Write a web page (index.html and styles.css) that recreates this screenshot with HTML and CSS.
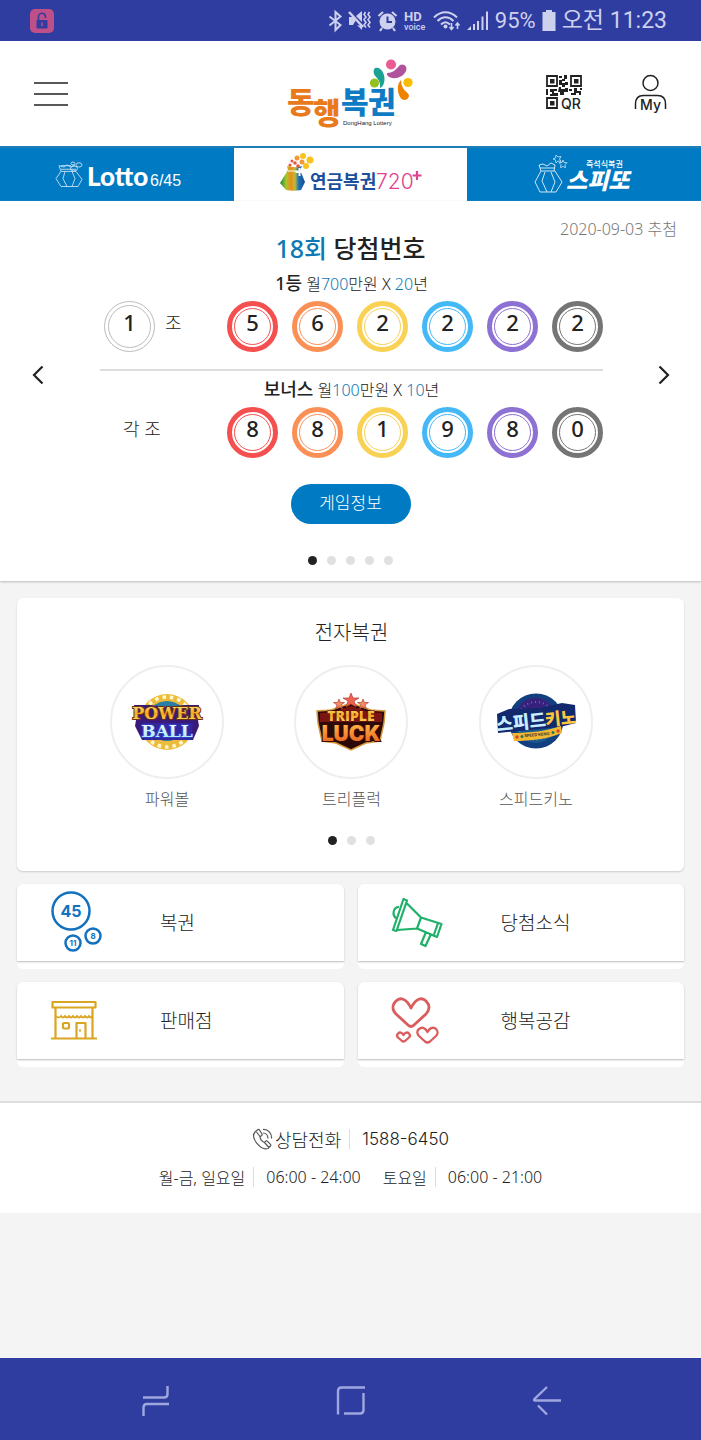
FILE: index.html
```html
<!DOCTYPE html>
<html lang="ko">
<head>
<meta charset="utf-8">
<meta name="viewport" content="width=device-width, initial-scale=1">
<title>동행복권</title>
<link rel="stylesheet" href="styles.css">
</head>
<body>
<div class="status">
  <svg class="status-lock" width="24" height="24" viewBox="0 0 24 24" aria-hidden="true">
    <rect width="24" height="24" rx="5" fill="#bf4f88"/>
    <path d="M8.500 11V8a3.500 3.500 0 0 1 7-.5V9" fill="none" stroke="#303da0" stroke-width="1.600"/>
    <rect x="6.500" y="11" width="11" height="8.500" rx="1" fill="#303da0"/>
    <path d="M12 13.500v3.500" stroke="#bf4f88" stroke-width="1.600"/>
  </svg>
  <svg width="15" height="22" viewBox="0 0 15 22" aria-hidden="true"><path d="M1.500 6.500 12.500 15 7.500 20V2l5 4.500L1.500 15.500" fill="none" stroke="#cdd1ee" stroke-width="2"/></svg>
  <svg width="22" height="22" viewBox="0 0 22 22" aria-hidden="true"><path d="M0 7h4l3 3-3 5H0zM7 6l6-5v11zM8 15l5 5v-4z" fill="#cdd1ee"/><path d="M0 2 14 17" stroke="#cdd1ee" stroke-width="2.500"/><path d="M16.500 2 15 4.500 17 7l-2 2.500 2 3L15 15l2 2.500M20.500 2 19 4.500 21 7l-2 2.500 2 3-2 2.500 2 2.500" fill="none" stroke="#cdd1ee" stroke-width="1.600"/></svg>
  <svg width="21" height="22" viewBox="0 0 21 22" aria-hidden="true"><circle cx="10.500" cy="11.500" r="8" fill="#cdd1ee"/><path d="M1.500 6 6 2M19.500 6 15 2M5 18l-2 3M16 18l2 3" stroke="#cdd1ee" stroke-width="2.200"/><path d="M10.500 6.500V12H15" fill="none" stroke="#303da0" stroke-width="2"/></svg>
  <svg width="23" height="22" viewBox="0 0 23 22" aria-label="HD voice"><text x="0" y="11" class="st-hd">HD</text><text x="0" y="20" class="st-voice">voice</text></svg>
  <svg width="28" height="22" viewBox="0 0 28 22" aria-hidden="true"><path d="M1 7.500c7-7 16-7 23 0M4.500 11c5-5 11-5 16 0M8 14.500c3-3 6-3 9 0" fill="none" stroke="#cdd1ee" stroke-width="2"/><circle cx="12.500" cy="16.500" r="2" fill="#cdd1ee"/><path d="M18.500 13v6M16.500 17l2 2.500 2-2.500M24.500 19v-6M22.500 15.500l2-2.500 2 2.500" fill="none" stroke="#cdd1ee" stroke-width="1.500"/></svg>
  <svg width="22" height="22" viewBox="0 0 22 22" aria-hidden="true"><path d="M0 20h4v-4zM6 20V14h2v6zM10 20v-9h2v9zM14.500 20V6.500h2V20zM19 20V1.500h2V20z" fill="#cdd1ee"/></svg>
  <span class="status-level">95%</span>
  <svg width="14" height="22" viewBox="0 0 14 22" aria-hidden="true"><path d="M4 0h6v2h3.500v19H.5V2H4z" fill="#cdd1ee"/></svg>
  <span class="status-time">오전 11:23</span>
</div>

<header class="header">
  <button class="icon-btn" type="button" aria-label="메뉴">
    <svg width="34" height="24" viewBox="0 0 34 24" aria-hidden="true"><path d="M0 1h34M0 12h34M0 23h34" stroke="#222" stroke-width="1.500"/></svg>
  </button>
  <a class="logo" href="#">
    <svg width="126" height="72" viewBox="0 0 126 72" role="img" aria-label="동행복권 DongHang Lottery">
      <g class="logo-word"><text x="-1" y="55" class="orange">동</text><text x="25" y="66" class="orange">행</text><text x="53" y="55" class="blue">복</text><text x="80" y="55" class="blue">권</text></g>
      <text x="55" y="67" class="logo-sub">DongHang Lottery</text>
      <circle cx="103" cy="6.500" r="5" fill="#ea5a93"/>
      <circle cx="86.500" cy="25" r="4.600" fill="#94c120"/>
      <circle cx="120" cy="24.500" r="4.600" fill="#fbbb00"/>
      <path d="M87 10c6-2 10 6 9.500 12-.3 4-2 7-4.500 8 1-8-4-10-6-14-1-3 0-5 1-6z" fill="#1ba196"/>
      <path d="M99 15c7 0 9-4 13-8 4-2 8 2 6 6-3 7-14 10-19 4z" fill="#b0539d"/>
      <path d="M113 22c-4 4-4 11-1 17 2 4 8 4 9-1 0-4-8-5-8-16z" fill="#ef8200"/>
    </svg>
  </a>
  <div class="header-tools">
    <button class="icon-btn" type="button">
      <svg width="38" height="38" viewBox="0 0 38 38" role="img" aria-label="QR">
        <g fill="none" stroke="#222" stroke-width="1.800"><path d="M1 1h10v10H1zM25 1h10v10H25zM1 23h10v10H1z"/></g>
        <path d="M4 4h4.500v4.500H4zM28 4h4.500v4.500H28zM4 26h4.500v4.500H4z" fill="#222"/>
        <path d="M13 1h3v2h-3zM18 0h3v4h-2v2h-3V4h2zM13 5h3v3h3V7h3v3h-3v2h-3v-2h-3zM13 12h2v2h4v-1h3v4h-4v3h-4v-3h-2zM0 14h2v6H0zM4 14h7v2H8v2h4v3H4v-2h2v-2H4zM23 14h3v2h-3zM28 13h3v3h4v4h-2v-2h-3v2h-5v-2h3zM34 13h2v2h-2z" fill="#222"/>
        <text x="15" y="34" class="tool-text">QR</text>
      </svg>
    </button>
    <button class="icon-btn" type="button">
      <svg width="33" height="38" viewBox="0 0 33 38" role="img" aria-label="My">
        <circle cx="16.500" cy="8" r="7.500" fill="none" stroke="#222" stroke-width="1.500"/>
        <path d="M1.500 34v-5c0-6 3-8.500 8-8.500h14c5 0 8 2.500 8 8.500v5" fill="none" stroke="#222" stroke-width="1.500"/>
        <text x="16.500" y="35" text-anchor="middle" class="tool-text">My</text>
      </svg>
    </button>
  </div>
</header>

<nav class="tabs">
  <a class="tab" href="#">
    <svg width="132" height="44" viewBox="-3 0 132 44" role="img" aria-label="Lotto 6/45">
      <g fill="none" stroke="#cfe6f5" stroke-width="1" transform="translate(0 4) scale(1 .72)"><path d="M7 20 2 30l5 11h17l4-10-6-11zM11 20l-2 10 4 11M18 20l3 10-3 11M7 20l-2-8 5 2 3-3 4 3 4-3M7 17h15M7 12h10"/><circle cx="25" cy="11" r="3"/><circle cx="20" cy="16" r="3.500"/><circle cx="19" cy="9" r="2"/></g>
      <text x="33" y="33" class="t-lotto">Lotto</text><text x="96" y="33" class="t-645">6/45</text>
    </svg>
  </a>
  <a class="tab tab-on" href="#" aria-current="page">
    <svg width="144" height="44" viewBox="0 0 144 44" role="img" aria-label="연금복권 720+">
      <defs><linearGradient id="bag"><stop offset="0" stop-color="#1c8a3c"/><stop offset=".25" stop-color="#a9c62a"/><stop offset=".45" stop-color="#f08a1c"/><stop offset=".6" stop-color="#b8c03a"/><stop offset=".75" stop-color="#1f6fb5"/><stop offset="1" stop-color="#164b92"/></linearGradient></defs>
      <g transform="translate(2 -4)">
        <path d="M7 17 8 21 0 34l6 7c5 1 10 1 15 0l4-8-5-12 2-4c-5 2-10 1-15 0z" fill="url(#bag)"/>
        <path d="M8 22h11" stroke="#fff" stroke-width="1"/>
        <path d="M19.500 19v8M15.500 23h8" stroke="#fff" stroke-width="2"/>
        <g fill="#f9c21c"><circle cx="23" cy="7" r="3"/><circle cx="30" cy="11" r="3.500"/><circle cx="26" cy="17" r="3"/></g>
        <g fill="#f2983a"><circle cx="17" cy="9" r="2.500"/><circle cx="22" cy="13" r="2.500"/></g>
        <g fill="#e6573d"><circle cx="12" cy="12" r="1.500"/><circle cx="15" cy="14" r="1.800"/><circle cx="10" cy="16" r="1.600"/><circle cx="18" cy="17" r="1.800"/></g>
      </g>
      <text x="32" y="35" class="t-pension">연금복권</text><text x="98" y="36" class="t-720">720</text><path d="M139 18v9M134.500 22.500h9" stroke="#e0418c" stroke-width="2.200"/>
    </svg>
  </a>
  <a class="tab" href="#">
    <svg width="104" height="44" viewBox="0 0 104 44" role="img" aria-label="즉석식복권 스피또">
      <g fill="none" stroke="#cfe6f5" stroke-width="1" transform="translate(2 -3)"><path d="M7 21 1 32l5 10h16l6-10-7-11zM11 22 8 31l5 11M17 22l4 10-4 10M7 21l-2-6 4-1 4 2 4-3 4 2-1 6M6 18h15"/><path d="m22 5 2 2 3-.5-1.500 2.500 1.500 2.500-3-.5-2 2-.5-3L19 9l2.500-1zM29 10l1 2.500 3 .2-2 2 .5 3-2.500-1.300-2.500 1.300.5-3-2-2 3-.2z" stroke-width=".8"/></g>
      <text x="54" y="14" class="t-instant">즉석식복권</text><text x="34" y="36" class="t-speetto">스피또</text>
    </svg>
  </a>
</nav>

<section class="result">
  <div class="result-head">
    <h1 class="round"><span class="accent">18회</span> 당첨번호</h1>
    <time class="date" datetime="2020-09-03">2020-09-03 추첨</time>
  </div>
  <div class="result-body">
    <button class="arrow" type="button" aria-label="이전"><svg width="12" height="20" viewBox="0 0 12 20" aria-hidden="true"><path d="M10.500 1.500 2 10l8.500 8.500" fill="none" stroke="#222" stroke-width="2.200"/></svg></button>
    <div class="prizes">
      <p class="prize-name"><strong>1등</strong> 월<span class="accent">700</span>만원 X <span class="accent">20</span>년</p>
      <div class="draw">
        <div class="group"><span class="ball plain">1</span><span>조</span></div>
        <div class="balls"><span class="ball red">5</span><span class="ball coral">6</span><span class="ball yellow">2</span><span class="ball sky">2</span><span class="ball purple">2</span><span class="ball gray">2</span></div>
      </div>
      <hr class="rule">
      <p class="prize-name"><strong>보너스</strong> 월<span class="accent">100</span>만원 X <span class="accent">10</span>년</p>
      <div class="draw">
        <div class="group group-all"><span>각 조</span></div>
        <div class="balls"><span class="ball red">8</span><span class="ball coral">8</span><span class="ball yellow">1</span><span class="ball sky">9</span><span class="ball purple">8</span><span class="ball gray">0</span></div>
      </div>
    </div>
    <button class="arrow" type="button" aria-label="다음"><svg width="12" height="20" viewBox="0 0 12 20" aria-hidden="true"><path d="M1.500 1.500 10 10l-8.500 8.500" fill="none" stroke="#222" stroke-width="2.200"/></svg></button>
  </div>
  <button class="info-btn" type="button">게임정보</button>
  <div class="dots"><i class="dot dot-on"></i><i class="dot"></i><i class="dot"></i><i class="dot"></i><i class="dot"></i></div>
</section>

<main class="main">
  <section class="games">
    <h2 class="games-title">전자복권</h2>
    <div class="games-list">
      <a class="game" href="#">
        <span class="game-pic">
          <svg width="84" height="60" viewBox="0 0 84 60" aria-hidden="true">
            <defs>
              <linearGradient id="gold" x2="0" y2="1"><stop offset="0" stop-color="#fff08a"/><stop offset=".5" stop-color="#f5a81e"/><stop offset="1" stop-color="#ffe27a"/></linearGradient>
              <linearGradient id="ice" x2="0" y2="1"><stop offset="0" stop-color="#fff"/><stop offset="1" stop-color="#9be8fa"/></linearGradient>
            </defs>
            <circle cx="42" cy="30" r="28" fill="#eebc3c"/>
            <circle cx="42" cy="30" r="25" fill="none" stroke="#fff7cf" stroke-width="3.500" stroke-dasharray="3.500 4"/>
            <circle cx="42" cy="29" r="20" fill="#2b7da6"/>
            <path d="M9 13h16l17 2 17-2h15l-1 15 1 6-6 14H17l-7-14 1-6z" fill="#3a1a78"/>
            <path d="M17 31h51l-2 17H19z" fill="#3526a0"/>
            <text x="42" y="27" text-anchor="middle" class="g-power">POWER</text>
            <text x="42" y="45" text-anchor="middle" class="g-ball">BALL</text>
          </svg>
        </span>
        <span class="game-name">파워볼</span>
      </a>
      <a class="game" href="#">
        <span class="game-pic">
          <svg width="84" height="60" viewBox="0 0 84 60" aria-hidden="true">
            <defs><linearGradient id="fire" x2="0" y2="1"><stop offset="0" stop-color="#ffc14a"/><stop offset="1" stop-color="#ea5a1c"/></linearGradient></defs>
            <path d="M42 11 62 18l14 1-1 12-4 18-14 2-15 7-15-7-14-2-4-18-1-12 14-1z" fill="#2a0908" stroke="#d69a3c" stroke-width="1.500"/>
            <path d="M42 14 60 20l13 1v9H11v-9l13-1z" fill="#7d1414"/>
            <g fill="#ef6250" stroke="#b5402d" stroke-width=".7"><path d="m42 1 2 5h6l-5 3 2 6-5-3-5 3 2-6-5-3h6z"/><path d="m30 7 1.500 3.500h4L32 13l1.500 4-3.500-2.500-3.500 2.500 1.500-4-3.500-2.500h4z" fill="#f38a67"/><path d="m54 7 1.500 3.500h4L56 13l1.500 4-3.500-2.500-3.500 2.500 1.500-4-3.500-2.500h4z" fill="#f38a67"/></g>
            <text x="42" y="29" text-anchor="middle" class="g-triple">TRIPLE</text>
            <text x="42" y="49" text-anchor="middle" class="g-luck">LUCK</text>
          </svg>
        </span>
        <span class="game-name">트리플럭</span>
      </a>
      <a class="game" href="#">
        <span class="game-pic">
          <svg width="84" height="60" viewBox="0 0 84 60" aria-hidden="true">
            <circle cx="42" cy="29" r="27.500" fill="#123f80"/>
            <circle cx="42" cy="29" r="22" fill="#17568f"/>
            <path d="M22 22a20 20 0 0 1 38-4L42 24z" fill="#39207c"/>
            <circle cx="42" cy="29" r="19" fill="none" stroke="#4d73b5" stroke-width="2" stroke-dasharray="1 3"/>
            <path d="m3 22 12-5 31-1 22-5 13 2 1 18-16 4-62 6z" fill="#12296e"/>
            <path d="M18 41c18 0 34-2 49-7l1 7c-14 6-31 8-48 8z" fill="#f2b832"/>
            <g fill="#d8472b"><circle cx="23" cy="45" r="1.700"/><circle cx="64" cy="39" r="1.700"/></g><g fill="#275"><circle cx="28" cy="44.500" r="1.500"/><circle cx="59" cy="40.500" r="1.500"/></g>
            <text x="43" y="44" text-anchor="middle" class="g-tiny" transform="rotate(-5 43 44)">SPEED KENO</text>
            <g transform="rotate(-6 42 28)"><text x="2" y="35" class="g-speed">스피드</text><text x="51" y="35" class="g-keno">키노</text></g>
          </svg>
        </span>
        <span class="game-name">스피드키노</span>
      </a>
    </div>
    <div class="dots"><i class="dot dot-on"></i><i class="dot"></i><i class="dot"></i></div>
  </section>

  <nav class="tiles">
    <a class="tile" href="#"><span class="tile-face">
      <svg width="54" height="64" viewBox="0 0 54 64" aria-hidden="true"><g fill="none" stroke="#1272be" stroke-width="2.500"><circle cx="20" cy="21" r="18.500"/><circle cx="42" cy="46" r="7.500"/><circle cx="22" cy="53" r="7.500"/></g><text x="20" y="27" text-anchor="middle" class="n45">45</text><text x="42" y="49" text-anchor="middle" class="n8">8</text><text x="22" y="56" text-anchor="middle" class="n8">11</text></svg>
      <span>복권</span></span></a>
    <a class="tile" href="#"><span class="tile-face">
      <svg width="54" height="64" viewBox="3 1 54 64" aria-hidden="true"><g fill="none" stroke="#1fb069" stroke-width="2.200" stroke-linejoin="round"><path d="M14.500 10 18 11.500 7.500 42 4 41zM17.500 14 32 28.500M8 41l20-1.500M32 28.500 52.500 35 48 48l-20-8.500zM49 34l-4.500 13M37 43l-5 12 4.500 2L42 45M10 18c-6 0-7 8-3 11"/></g></svg>
      <span>당첨소식</span></span></a>
    <a class="tile" href="#"><span class="tile-face">
      <svg width="54" height="64" viewBox="0 0 54 64" aria-hidden="true"><g fill="none" stroke="#daa520" stroke-width="2.200"><path d="M1.500 14h43v5.500h-43zM4.500 20v30M41.500 20v30M0 50.500h46M25.500 50V35h9v15" stroke-linejoin="round"/><rect x="12" y="35" width="6" height="5.500" rx="1"/><path d="M5 28q2.500 3 5 0q2 3 4 0q2 3 4 0q2 3 4 0q2 3 4 0q2 3 4 0q2 3 4 0q2 3 4 0q2 3 3.500 0" stroke-width="1.800"/><path d="M28 42.500h2"/></g></svg>
      <span>판매점</span></span></a>
    <a class="tile" href="#"><span class="tile-face">
      <svg width="54" height="64" viewBox="1 -1 54 64" aria-hidden="true"><g fill="none" stroke="#db5c5c" stroke-width="2.800" stroke-linejoin="round"><path d="M20 19C15 9 9 8 5 12s-4 9 0 13l12 11q3 3 6 0l12-11c4-4 4-9 0-13s-10-3-15 7z"/><path d="M36.500 43c-2.500-5-6-5-8.500-3s-2 5 0 7l6 5.500q2.500 2 5 0l6-5.500c2-2 2-5 0-7s-6-2-8.500 3z" stroke-width="2.300"/><path d="M12.500 46c-1.500-3-4-3-5.500-1.500s-1 3 0 4l4 3.500q1.500 1 3 0l4-3.500c1-1 1.500-2.500 0-4s-4-1.500-5.500 1.500z" stroke-width="2.300"/></g></svg>
      <span>행복공감</span></span></a>
  </nav>
</main>

<footer class="footer">
  <p class="call">
    <svg width="21" height="22" viewBox="0 0 21 22" aria-hidden="true"><path d="M3 4 6 1.500q1-.5 1.500.5L10 6q.5 1-.5 1.500L8 9c0 2 2.500 5 4.500 5.500L14 13q1-.5 1.500.3l3 3q.7 1 0 1.700L16 20.500C9 23-2 10 3 4zM4.500 4 8 8.500M12.500 14.500l4.500 5M11 1.500c5-.5 9 4 8.500 9M11 5c3 0 5 2.500 5 5.500" fill="none" stroke="#555" stroke-width="1.200"/></svg>
    <span class="call-label">상담전화</span><span class="bar call-num">1588-6450</span>
  </p>
  <p class="hours"><span>월-금, 일요일</span><span class="bar">06:00 - 24:00</span><span class="hours-sat">토요일</span><span class="bar">06:00 - 21:00</span></p>
</footer>
<div class="spacer"></div>

<nav class="sysnav">
  <button class="icon-btn" type="button" aria-label="최근 앱"><svg width="30" height="32" viewBox="0 0 30 32" aria-hidden="true"><path d="M2 12.500h21q3.500 0 3.500-3.500V1M28 19H6q-3.500 0-3.500 3.500V31" fill="none" stroke="#9fa7df" stroke-width="2.400"/></svg></button>
  <button class="icon-btn" type="button" aria-label="홈"><svg width="30" height="32" viewBox="0 0 30 32" aria-hidden="true"><path d="M2 29.500V6q0-3.500 3.500-3.500H29M27.500 8v17q0 3.500-3.500 3.500H8" fill="none" stroke="#9fa7df" stroke-width="2.400"/></svg></button>
  <button class="icon-btn" type="button" aria-label="뒤로"><svg width="30" height="32" viewBox="0 0 30 32" aria-hidden="true"><path d="M15 2 2.500 14q-1 1.500.5 1.500h26M6 20.500l9 9" fill="none" stroke="#9fa7df" stroke-width="2.400"/></svg></button>
</nav>
</body>
</html>
```

FILE: styles.css
```css
* { box-sizing: border-box; }

body {
  margin: 0;
  min-height: 100vh;
  display: flex;
  flex-direction: column;
  background: #f4f4f4;
  color: #222;
  font-family: "Noto Sans", "Noto Sans CJK KR", sans-serif;
  font-weight: 300;
  font-size: 16px;
}

h1, h2, p { margin: 0; font-weight: 300; }
a { color: inherit; text-decoration: none; }
svg { display: block; flex: none; overflow: visible; }
button { font: inherit; color: inherit; border: 0; padding: 0; background: none; cursor: pointer; }

/* Device status bar */
.status {
  display: flex;
  align-items: center;
  justify-content: flex-end;
  gap: 6px;
  height: 41px;
  padding: 0 34px 0 30px;
  background: #303da0;
  color: #cdd1ee;
  font-family: Roboto, "Noto Sans CJK KR", sans-serif;
  font-weight: 400;
  line-height: 40px;
}
.status-lock { margin-right: auto; }
.status-level { font-size: 22px; }
.status-time { font-size: 23px; }
.st-hd { font: 700 13px Roboto, sans-serif; fill: #cdd1ee; }
.st-voice { font: 500 9px Roboto, sans-serif; fill: #cdd1ee; }

/* Header */
.header {
  display: grid;
  grid-template-columns: 1fr auto 1fr;
  align-items: center;
  height: 105px;
  padding: 0 34px;
  background: #fff;
}
.header > .icon-btn { justify-self: start; }
.header-tools { display: flex; justify-content: flex-end; gap: 50px; }
.logo-word { font: 900 30px "Noto Sans CJK KR", sans-serif; }
.orange { fill: #e87a1d; }
.blue { fill: #0f7bc4; }
.logo-sub { font: 400 6px "Liberation Sans", sans-serif; fill: #222; }
.tool-text { font: 500 14px Inter, sans-serif; fill: #222; }

/* Lottery tabs */
.tabs {
  display: grid;
  grid-template-columns: repeat(3, 1fr);
  border-top: 2px solid #1d7fb5;
}
.tab {
  display: flex;
  align-items: center;
  justify-content: center;
  height: 53px;
  background: #007ac3;
}
.tab-on { background: #fff; }
.t-lotto { font: 900 26px Lato, sans-serif; fill: #fff; }
.t-645 { font: 400 16px "Liberation Sans", sans-serif; fill: #fff; }
.t-pension { font: 700 18px "Noto Sans CJK KR", sans-serif; fill: #1c4f9c; }
.t-720 { font: 300 21px Inter, sans-serif; fill: #e0418c; }
.t-instant { font: 500 8px "Noto Sans CJK KR", sans-serif; fill: #fff; }
.t-speetto { font: italic 900 23px "Noto Sans CJK KR", sans-serif; fill: #fff; }

/* Winning numbers */
.result {
  display: flex;
  flex-direction: column;
  align-items: center;
  padding-bottom: 16px;
  background: #fff;
  box-shadow: 0 1px 2px #bbb;
}
.result-head {
  display: grid;
  grid-template-columns: 1fr auto 1fr;
  align-self: stretch;
  padding: 16px 24px 0;
}
.round {
  grid-column: 2;
  padding-top: 12px;
  font-size: 25px;
  font-weight: 500;
  line-height: 38px;
}
.accent { color: #0f78b4; }
.date { justify-self: end; color: #777; line-height: 24px; }
.result-body {
  display: grid;
  grid-template-columns: 100px 1fr 98px;
  align-self: stretch;
}
.arrow {
  display: flex;
  align-items: center;
  padding: 24px 32px 0;
}
.arrow:last-child { justify-content: flex-end; padding: 24px 31px 0; }
.prize-name { text-align: center; line-height: 32px; height: 34px; }
.prize-name strong { font-size: 18px; font-weight: 500; }
.draw { display: flex; justify-content: space-between; }
.group { display: flex; align-items: center; gap: 10px; padding-left: 4px; line-height: 44px; font-size: 18px; }
.group > span:last-child { align-self: flex-start; }
.group-all { padding-left: 23px; }
.balls { display: flex; gap: 14px; }
.ball {
  width: 51px;
  height: 51px;
  border: 5px solid;
  border-radius: 50%;
  display: grid;
  place-items: center;
  padding-bottom: 9px;
  color: #222;
  font-size: 22px;
  font-weight: 500;
  line-height: 32px;
  position: relative;
}
.ball::after {
  content: "";
  position: absolute;
  inset: 2px;
  border: 1px solid;
  border-radius: 50%;
}
.plain { border-width: 1px; border-color: #bbb; }
.plain::after { inset: 3px; border-color: #bbb; }
.red, .red::after { border-color: #f4504f; }
.coral, .coral::after { border-color: #fa9056; }
.yellow, .yellow::after { border-color: #f8d155; }
.sky, .sky::after { border-color: #45b9f7; }
.purple, .purple::after { border-color: #8d71d3; }
.gray, .gray::after { border-color: #757575; }
.rule { width: 100%; margin: 17px 0 2px; border: 0; border-top: 2px solid #ddd; }
.info-btn {
  width: 120px;
  height: 40px;
  margin-top: 26px;
  border-radius: 20px;
  background: #007ac3;
  color: #fff;
  font-size: 17px;
  line-height: 36px;
  padding-bottom: 2px;
}
.dots { display: flex; justify-content: center; gap: 10px; }
.result .dots { margin-top: 32px; }
.dot { width: 9px; height: 9px; border-radius: 50%; background: #e0e0e0; }
.dot-on { background: #222; }

/* Electronic lottery */
.main { padding: 17px 17px 34px; }
.games {
  padding: 20px 56px 26px 58px;
  border-radius: 6px;
  background: #fff;
  box-shadow: 0 1px 2px #ccc;
}
.games-title { font-size: 20px; line-height: 30px; text-align: center; }
.games-list { display: grid; grid-template-columns: repeat(3, 1fr); margin: 17px 0 25px; }
.game { display: flex; flex-direction: column; align-items: center; gap: 8px; }
.game-pic {
  display: grid;
  place-items: center;
  width: 114px;
  height: 114px;
  border: 2px solid #eee;
  border-radius: 50%;
}
.game-name { color: #555; line-height: 24px; }
.g-power { font: 700 16px "DejaVu Serif", serif; fill: url(#gold); stroke: #6b3410; stroke-width: 2px; paint-order: stroke; }
.g-ball { font: 700 17px "DejaVu Serif", serif; fill: url(#ice); stroke: #2f3fc4; stroke-width: 2px; paint-order: stroke; }
.g-triple { font: 800 14px "Open Sans", sans-serif; fill: url(#gold); stroke: #5a0e0e; stroke-width: 1px; paint-order: stroke; }
.g-luck { font: 900 21px Inter, sans-serif; fill: url(#fire); stroke: #3a0a06; stroke-width: 2px; paint-order: stroke; }
.g-speed { font: 900 18px "Noto Sans CJK KR", sans-serif; fill: #c8eeff; }
.g-keno { font: 900 17px "Noto Sans CJK KR", sans-serif; fill: #fcc83a; }
.g-tiny { font: 700 4px Inter, sans-serif; fill: #333; }

/* Shortcut tiles */
.tiles { display: grid; grid-template-columns: 1fr 1fr; gap: 13px 14px; margin-top: 13px; }
.tile { padding-bottom: 8px; border-radius: 6px; background: #fff; }
.tile-face {
  display: grid;
  grid-template-columns: 109px 1fr;
  align-items: center;
  height: 77px;
  padding: 0 0 2px 34px;
  border-radius: 6px 6px 0 0;
  box-shadow: 0 1px 2px #bbb;
  font-size: 19px;
}
.n45 { font: 700 16px Inter, sans-serif; fill: #1272be; }
.n8 { font: 700 8px Inter, sans-serif; fill: #1272be; }

/* Footer */
.footer {
  padding: 22px 16px;
  border-top: 2px solid #ddd;
  background: #fff;
}
.call, .hours { display: flex; align-items: center; justify-content: center; }
.call { height: 28px; margin-bottom: 10px; }
.call-label { margin-left: 2px; font-size: 18px; }
.bar { margin-left: 8px; padding-left: 12px; border-left: 1px solid #ddd; line-height: 20px; }
.call-num { font-family: Inter, sans-serif; font-size: 17px; font-weight: 300; }
.hours { height: 28px; }
.hours-sat { margin-left: 22px; }
.spacer { flex: 1; }

/* Device navigation */
.sysnav {
  display: grid;
  grid-template-columns: repeat(3, 1fr);
  align-items: center;
  justify-items: center;
  height: 82px;
  padding: 4px 56px 0 58px;
  background: #303da0;
}
```
